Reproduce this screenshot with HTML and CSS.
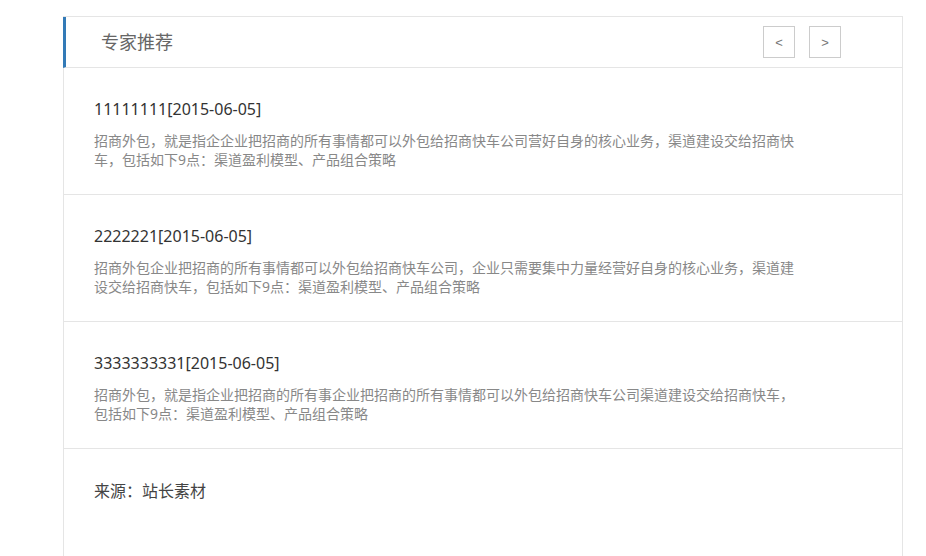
FILE: index.html
```html
<!DOCTYPE html>
<html lang="zh-CN">
<head>
  <meta charset="UTF-8" />
  <title>专家推荐</title>
  <link rel="stylesheet" href="styles.css">
</head>
<body>
  <div class="panel">
    <div class="panel-head">
      <h3>专家推荐</h3>
      <div class="nav">
        <button class="nav-btn">&lt;</button>
        <button class="nav-btn">&gt;</button>
      </div>
    </div>

    <div class="item">
      <h4>11111111[2015-06-05]</h4>
      <p>招商外包，就是指企企业把招商的所有事情都可以外包给招商快车公司营好自身的核心业务，渠道建设交给招商快车，包括如下9点：渠道盈利模型、产品组合策略</p>
    </div>
    <div class="item">
      <h4>2222221[2015-06-05]</h4>
      <p>招商外包企业把招商的所有事情都可以外包给招商快车公司，企业只需要集中力量经营好自身的核心业务，渠道建设交给招商快车，包括如下9点：渠道盈利模型、产品组合策略</p>
    </div>
    <div class="item">
      <h4>3333333331[2015-06-05]</h4>
      <p>招商外包，就是指企业把招商的所有事企业把招商的所有事情都可以外包给招商快车公司渠道建设交给招商快车，包括如下9点：渠道盈利模型、产品组合策略</p>
    </div>

    <div class="source">来源：站长素材</div>
  </div>
</body>
</html>
```

FILE: styles.css
```css
body {
  margin: 0;
  padding: 16px 0 0 63px;
  background: #fff;
  font-family: "Noto Sans", "Noto Sans CJK SC", sans-serif;
  color: #333;
}
.panel {
  width: 838px;
  border: 1px solid #e5e5e5;
  border-bottom: none;
  min-height: 560px;
}
.panel-head {
  height: 50px;
  display: flex;
  align-items: center;
  justify-content: space-between;
  border-bottom: 1px solid #e5e5e5;
  border-left: 3px solid #337ab7;
  margin-left: -1px;
  padding: 0 61px 0 35px;
}
.panel-head h3 {
  margin: 0;
  font-size: 18px;
  font-weight: normal;
  color: #666;
  line-height: 24px;
}
.nav {
  display: flex;
  gap: 14px;
}
.nav-btn {
  width: 32px;
  height: 32px;
  padding: 0;
  border: 1px solid #ccc;
  background: #fff;
  color: #777;
  font-family: "Liberation Sans", sans-serif;
  font-size: 13px;
  cursor: pointer;
}
.item {
  padding: 29px 30px 25px;
  border-bottom: 1px solid #e5e5e5;
}
.item h4 {
  margin: 0;
  font-size: 16px;
  font-weight: normal;
  line-height: 24px;
  color: #333;
}
.item p {
  margin: 10px 0 0;
  width: 705px;
  font-size: 14px;
  line-height: 19px;
  color: #888;
}
.source {
  padding: 30px 30px;
  font-size: 16px;
  line-height: 24px;
  color: #444;
}
```
